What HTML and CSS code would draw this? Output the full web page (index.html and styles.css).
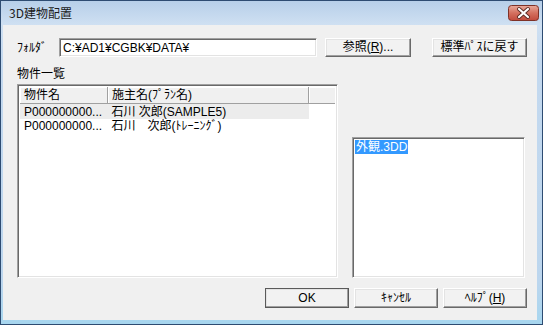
FILE: index.html
```html
<!DOCTYPE html>
<html lang="ja">
<head>
  <meta charset="UTF-8">
  <title>3D建物配置</title>
  <link rel="stylesheet" href="styles.css">
</head>
<body>
  <div class="window">
    <div class="titlebar">
      <span class="title">3D建物配置</span>
      <button class="close" title="閉じる">
        <svg width="31" height="16" viewBox="0 0 31 16">
          <defs>
            <linearGradient id="red" x1="0" y1="0" x2="0" y2="1">
              <stop offset="0" stop-color="#e9a99b"/>
              <stop offset="0.5" stop-color="#d4705f"/>
              <stop offset="1" stop-color="#c24a3c"/>
            </linearGradient>
          </defs>
          <rect x="0.5" y="0.5" width="30" height="15" rx="3" fill="url(#red)" stroke="#7e3127"/>
          <path d="M11 4 L20 12 M20 4 L11 12" stroke="#5a2a24" stroke-width="4" stroke-linecap="round"/>
          <path d="M11 4 L20 12 M20 4 L11 12" stroke="#fff" stroke-width="2.2" stroke-linecap="round"/>
        </svg>
      </button>
    </div>

    <div class="client">
      <div class="folder-row">
        <label for="folder">ﾌｫﾙﾀﾞ</label>
        <input id="folder" type="text" value="C:¥AD1¥CGBK¥DATA¥">
        <button class="btn browse">参照(<u>R</u>)...</button>
        <button class="btn reset">標準ﾊﾟｽに戻す</button>
      </div>

      <div class="section-label">物件一覧</div>

      <div class="lists">
        <div class="listview">
          <table>
            <thead>
              <tr>
                <th class="col-name">物件名</th>
                <th class="col-owner">施主名(ﾌﾟﾗﾝ名)</th>
                <th class="col-rest"></th>
              </tr>
            </thead>
            <tbody>
              <tr class="current">
                <td>P000000000...</td>
                <td>石川 次郎(SAMPLE5)</td>
                <td class="blank"></td>
              </tr>
              <tr>
                <td>P000000000...</td>
                <td>石川　次郎(ﾄﾚｰﾆﾝｸﾞ)</td>
                <td class="blank"></td>
              </tr>
            </tbody>
          </table>
        </div>

        <ul class="filelist">
          <li class="selected">外観.3DD</li>
        </ul>
      </div>

      <div class="footer">
        <button class="btn default">OK</button>
        <button class="btn">ｷｬﾝｾﾙ</button>
        <button class="btn">ﾍﾙﾌﾟ(<u>H</u>)</button>
      </div>
    </div>
  </div>
</body>
</html>
```

FILE: styles.css
```css
html, body {
  margin: 0;
  padding: 0;
  background: #f0f0f0;
}
body {
  font-family: "Liberation Sans", "Noto Sans CJK JP", sans-serif;
  font-size: 12px;
  color: #000;
}
.window {
  width: 543px;
  height: 325px;
  box-sizing: border-box;
  border: 1px solid #2e4c72;
  padding: 0 5px 4px 2px;
  display: flex;
  flex-direction: column;
  background: linear-gradient(to bottom, #b7cfe9 0, #cfe0f2 24px, #c4d9ef 60px, #bcd6ee 280px, #a7d6ef 100%);
}
.titlebar {
  height: 24px;
  display: flex;
  align-items: center;
  position: relative;
}
.title {
  margin-left: 6px;
  font-family: "Noto Sans CJK JP", sans-serif;
  font-size: 12px;
  line-height: 14px;
  color: #1b1b1b;
  margin-top: -1px;
}
.close {
  position: absolute;
  right: -2px;
  top: 4px;
  width: 31px;
  height: 16px;
  padding: 0;
  border: none;
  background: none;
}
.close svg {
  display: block;
}

.client {
  flex: 1;
  background: #f0f0f0;
  padding: 13px 10px 0 14px;
}

.folder-row {
  display: flex;
  align-items: center;
  height: 19px;
}
.folder-row label {
  width: 42px;
  line-height: 14px;
}
.folder-row input {
  width: 258px;
  height: 19px;
  box-sizing: border-box;
  margin: 0;
  padding: 0 3px;
  font: inherit;
  line-height: 15px;
  background: #fff;
  border: 1px solid;
  border-color: #a0a0a0 #fff #fff #a0a0a0;
  box-shadow: inset 1px 1px #696969, inset -1px -1px #e3e3e3;
  outline: none;
}

.btn {
  height: 19px;
  box-sizing: border-box;
  padding: 0;
  margin: 0;
  font: inherit;
  line-height: 15px;
  color: #000;
  background: #f2f2f2;
  border: 1px solid;
  border-color: #fff #696969 #696969 #fff;
  box-shadow: inset -1px -1px #a0a0a0, inset 1px 1px #e3e3e3;
}
.btn u {
  text-underline-offset: 1px;
}
.browse {
  width: 86px;
  margin-left: 8px;
}
.reset {
  width: 95px;
  margin-left: auto;
}

.section-label {
  margin-top: 10px;
  line-height: 14px;
  height: 14px;
}

.lists {
  display: flex;
  align-items: flex-end;
  margin-top: 3px;
}
.listview {
  width: 321px;
  height: 194px;
  box-sizing: border-box;
  background: #fff;
  border: 1px solid;
  border-color: #a0a0a0 #fff #fff #a0a0a0;
  box-shadow: inset 1px 1px #696969, inset -1px -1px #e3e3e3;
  padding: 2px;
}
.listview table {
  border-collapse: collapse;
  table-layout: fixed;
  width: 100%;
}
.listview th {
  height: 16px;
  padding: 0 0 0 4px;
  font-weight: normal;
  text-align: left;
  line-height: 14px;
  background: #f0f0f0;
  border-right: 1px solid #a0a0a0;
  border-bottom: 1px solid #a0a0a0;
  box-shadow: inset 1px 1px #fff;
  white-space: nowrap;
}
.col-name { width: 83px; }
.col-owner { width: 196px; }
.col-rest { border-right: none !important; }
.listview td {
  height: 14px;
  padding: 0 0 0 4px;
  line-height: 14px;
  white-space: nowrap;
}
.listview tbody tr:first-child td {
  padding-top: 1px;
}
.listview tr.current td {
  background: #ececec;
}
.listview tr.current td.blank {
  background: none;
}

.filelist {
  list-style: none;
  margin: 0 0 0 14px;
  padding: 2px;
  width: 173px;
  height: 141px;
  box-sizing: border-box;
  background: #fff;
  border: 1px solid;
  border-color: #a0a0a0 #fff #fff #a0a0a0;
  box-shadow: inset 1px 1px #696969, inset -1px -1px #e3e3e3;
}
.filelist li {
  display: inline-block;
  line-height: 14px;
  padding: 0 1px;
}
.filelist li.selected {
  background: #3399ff;
  color: #fff;
}

.footer {
  display: flex;
  justify-content: flex-end;
  gap: 5px;
  margin-top: 10px;
}
.footer .btn {
  width: 84px;
  height: 20px;
}
.btn.default {
  outline: 1px solid #5a5a5a;
  outline-offset: -1px;
}
```
